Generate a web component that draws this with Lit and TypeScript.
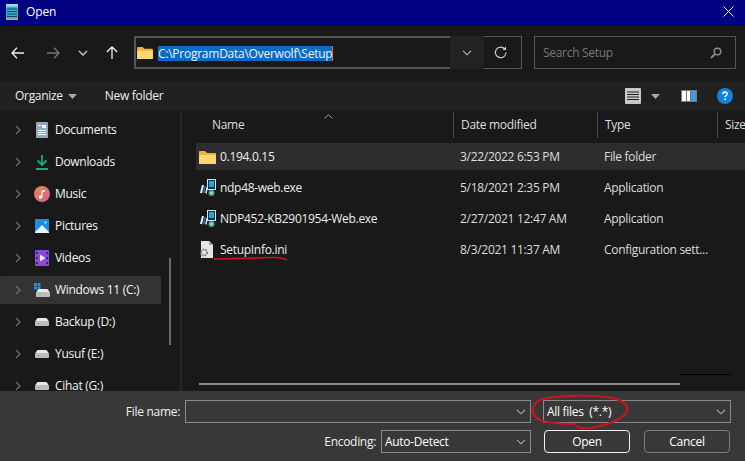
import { LitElement, html, css, svg } from "lit";
import { customElement } from "lit/decorators.js";

const chevronDown = (c = "#bbb") => html`<svg width="10" height="6" viewBox="0 0 10 6"><path d="M1 .8 5 4.800 9 .8" fill="none" stroke="${c}" stroke-width="1.100"/></svg>`;
const caret = html`<svg width="9" height="5" viewBox="0 0 9 5"><path d="M0 0h9L4.500 5z" fill="#aaa"/></svg>`;
const folder = (w: number, h: number) => html`<svg width="${w}" height="${h}" viewBox="0 0 17 14"><path d="M0 2a1 1 0 0 1 1-1h5l2 2h8a1 1 0 0 1 1 1v9a1 1 0 0 1-1 1H1a1 1 0 0 1-1-1z" fill="#eeb33c"/><path d="M0 5h17v8a1 1 0 0 1-1 1H1a1 1 0 0 1-1-1z" fill="#fcd873"/></svg>`;
const drive = html`<svg width="14" height="8" viewBox="0 0 14 8"><path d="M2.500 0h9L14 3.500H0z" fill="#e8e8e8"/><rect y="3" width="14" height="5" rx="1" fill="#bdbdbd"/><rect x="2.500" y="5" width="2" height="1" fill="#4fd34f"/></svg>`;
const exeIcon = html`<svg width="17" height="18" viewBox="0 0 17 18"><rect x="8.500" y=".5" width="8" height="10" fill="#0d2f5c" stroke="#d8e4ee"/><rect x="10" y="2" width="5" height="6" fill="#2aa6c6"/><path d="M1 14 3 6h2L3 14z" fill="#f2f2f2"/><path d="M3.500 14 5.500 7h1.500L5.500 14z" fill="#2d62c4"/><path d="M6 15 7.500 8H9L7.500 15z" fill="#efefef"/><rect x="1" y="14" width="6" height="1.500" fill="#222"/><circle cx="12.500" cy="14" r="3" fill="#3aa8c0"/><circle cx="12.500" cy="14" r="1.300" fill="#dfe04a"/></svg>`;
const iniIcon = html`<svg width="15" height="17" viewBox="0 0 15 17"><path d="M2 0h8l4 4v13H2z" fill="#e4e4e4"/><path d="M10 0v4h4z" fill="#a8a8a8"/><circle cx="5" cy="11.500" r="3" fill="none" stroke="#7a7a7a" stroke-width="2" stroke-dasharray="1.500 1"/></svg>`;

const icons: Record<string, unknown> = {
  doc: html`<svg width="12" height="16" viewBox="0 0 12 16"><rect width="12" height="16" rx="1" fill="#8fa9c4"/><path d="M6 3h4v3H6zM2 3h3v1H2zM2 8h8v1H2zM2 10h8v1H2zM2 12h8v1H2z" fill="#f4f7fa"/></svg>`,
  down: html`<svg width="12" height="15" viewBox="0 0 12 15"><path d="M6 0v10M1.500 5.500 6 10l4.500-4.500" fill="none" stroke="#1fa884" stroke-width="1.800"/><rect y="13" width="12" height="2" fill="#1fa884"/></svg>`,
  music: html`<svg width="16" height="16" viewBox="0 0 16 16"><defs><linearGradient id="m" x1="0" y1="0" x2="1" y2="1"><stop offset="0" stop-color="#ef8a4a"/><stop offset="1" stop-color="#c9609a"/></linearGradient></defs><circle cx="8" cy="8" r="8" fill="url(#m)"/><circle cx="6.500" cy="11" r="1.800" fill="#fff"/><path d="M7.500 11V4.500L11 4v1.800l-2.500.5V11z" fill="#fff"/></svg>`,
  pic: html`<svg width="14" height="14" viewBox="0 0 14 14"><rect width="14" height="14" rx="1" fill="#1a8fe0"/><path d="M0 13 7 6l7 7v1H0z" fill="#eaf6ff"/><circle cx="10.500" cy="3.500" r="1" fill="#fff"/></svg>`,
  vid: html`<svg width="14" height="16" viewBox="0 0 14 16"><rect width="14" height="16" rx="1" fill="#8a4bd8"/><path d="M1 2h1.500v2H1zM1 7h1.500v2H1zM1 12h1.500v2H1zM11.500 2H13v2h-1.500zM11.500 7H13v2h-1.500zM11.500 12H13v2h-1.500z" fill="#2a1450"/><path d="M5 4.500v7L10.500 8z" fill="#efe6ff"/></svg>`,
  win: html`<svg width="16" height="15" viewBox="0 0 16 15"><path d="M0 0h3v3H0zM3.500 0h3v3h-3zM0 3.500h3v3H0zM3.500 3.500h3v3h-3z" fill="#1d8fe6"/><g transform="translate(2 6)"><path d="M2.500 0h9L14 3.500H0z" fill="#e8e8e8"/><rect y="3" width="14" height="5" rx="1" fill="#bdbdbd"/><rect x="2.500" y="5" width="2" height="1" fill="#4fd34f"/></g></svg>`,
  drive,
};

const side = [
  ["doc", "Documents"], ["down", "Downloads"], ["music", "Music"], ["pic", "Pictures"], ["vid", "Videos"],
  ["win", "Windows 11 (C:)"], ["drive", "Backup (D:)"], ["drive", "Yusuf (E:)"], ["drive", "Cihat (G:)"],
];
const files = [
  [folder(17, 14), "0.194.0.15", "3/22/2022 6:53 PM", "File folder"],
  [exeIcon, "ndp48-web.exe", "5/18/2021 2:35 PM", "Application"],
  [exeIcon, "NDP452-KB2901954-Web.exe", "2/27/2021 12:47 AM", "Application"],
  [iniIcon, "SetupInfo.ini", "8/3/2021 11:37 AM", "Configuration sett..."],
];

@customElement("app-root")
export class AppRoot extends LitElement {
  static styles = css`
    :host { display: block; position: relative; width: 745px; height: 461px; overflow: hidden; background: #191919; color: #fff;
      font: 12px/16px "Open Sans", "Noto Sans", sans-serif; letter-spacing: -0.3px; }
    .title { height: 26px; background: #000080; display: flex; align-items: center; padding: 0 0 3px 6px; box-sizing: border-box; }
    .title .name { margin-left: 8px; flex: 1; letter-spacing: -0.1px; }
    .title .close { margin-right: 11px; display: flex; }
    .nav { height: 55px; display: flex; align-items: flex-start; padding-top: 10px; box-sizing: border-box; }
    .arrows { width: 134px; height: 33px; display: flex; align-items: center; }
    .arrows svg { flex: none; }
    .b1 { margin-left: 11px; } .b2 { margin-left: 23px; } .b3 { margin-left: 18px; } .b4 { margin-left: 18px; }
    .addr { width: 316px; height: 33px; box-sizing: border-box; border: 2px solid #555; border-right: 0; display: flex; align-items: center; padding-left: 1px; }
    .addr .path { margin-left: 5px; margin-top: 2px; background: #0a6bc4; height: 15px; line-height: 15px; color: #f2f2f2; border-right: 1px solid #e8742a; letter-spacing: -0.25px; }
    .drop { width: 34px; height: 33px; background: #222; display: flex; align-items: center; justify-content: center; }
    .ref { width: 38px; height: 33px; box-sizing: border-box; border: 1px solid #555; border-left: 0; display: flex; align-items: center; justify-content: center; padding-right: 4px; }
    .search { margin-left: 12px; width: 202px; height: 33px; box-sizing: border-box; border: 1px solid #555; display: flex; align-items: center; justify-content: space-between; padding: 0 13px 0 8px; color: #777; }
    .tools { height: 30px; background: #202020; display: flex; align-items: center; padding-left: 15px; color: #eee; }
    .tools .cr { margin-left: 5px; display: flex; }
    .tools .nf { margin-left: 28px; flex: 1; }
    .tools .v { display: flex; }
    .tools .vc { margin-left: 10px; margin-right: 21px; display: flex; }
    .tools .help { margin: 0 12px 0 20px; display: flex; }
    .main { height: 280px; display: flex; }
    .sidebar { width: 180px; box-sizing: border-box; padding-top: 5px; overflow: hidden; display: flex; flex-direction: column; gap: 4px; position: relative; flex: none; }
    .srow { width: 161px; min-height: 28px; height: 28px; flex: none; display: flex; align-items: center; border-radius: 2px; color: #f4f4f4; }
    .srow.sel { background: #333; }
    .srow .ch { margin-left: 15px; width: 8px; display: flex; }
    .srow .ic { margin-left: 8px; width: 22px; height: 20px; display: flex; align-items: center; justify-content: center; flex: none; }
    .srow .tx { margin-left: 2px; white-space: nowrap; }
    .vbar { position: absolute; left: 169px; top: 147px; width: 2px; height: 87px; background: #6a6a6a; }
    .list { flex: 1; border-left: 2px solid #262626; margin-top: 1px; position: relative; overflow: hidden; }
    .head { height: 26px; display: grid; grid-template-columns: 271px 144px 120px 1fr; color: #ddd; position: relative; }
    .head div { padding-left: 7px; display: flex; align-items: center; border-left: 1px solid #4a4a4a; white-space: nowrap; }
    .head div:first-child { padding-left: 30px; border-left: 0; }
    .sort { position: absolute; left: 142px; top: 2px; display: flex; }
    .rows { margin: 5px 0 0 14px; display: flex; flex-direction: column; gap: 4px; }
    .frow { height: 27px; display: grid; grid-template-columns: 257px 144px 1fr; align-items: center; color: #ededed; }
    .frow.sel { background: #2d2d2d; }
    .fname { display: flex; align-items: center; }
    .fic { width: 24px; padding-left: 3px; box-sizing: border-box; display: flex; flex: none; }
    .frow .d { padding-left: 7px; color: #ddd; }
    .frow .t { padding-left: 7px; color: #ddd; white-space: nowrap; }
    .hbar { position: absolute; left: 17px; top: 271px; width: 481px; height: 2px; background: #8a8a8a; }
    .blk { position: absolute; left: 498px; top: 262px; width: 51px; height: 1px; background: #000; }
    .foot { height: 70px; background: #383838; box-sizing: border-box; padding-top: 9px; display: flex; flex-direction: column; gap: 7px; }
    .fl { display: flex; height: 23px; align-items: center; }
    .lab { text-align: right; margin-right: 5px; color: #f0f0f0; flex: none; }
    .box { height: 23px; box-sizing: border-box; border: 1px solid #8a8a8a; display: flex; align-items: center; justify-content: space-between; padding: 0 4px 0 3px; flex: none; }
    .btn { width: 86px; height: 23px; box-sizing: border-box; border: 1px solid #7c7c7c; border-radius: 4px; display: flex; align-items: center; justify-content: center; flex: none; }
    .btn.pri { border-color: #f0f0f0; }
    .ink { position: absolute; left: 0; top: 0; pointer-events: none; }
  `;

  render() {
    return html`
      <div class="title">
        <svg width="12" height="16" viewBox="0 0 12 16"><rect y="1" width="12" height="15" fill="#3ea9c9"/><path d="M1 5h10M1 7.500h10M1 10h10M1 12.500h10" stroke="#0c4a63" stroke-width="1"/><path d="M0 0h12v2.500H0z" fill="#9fdcec"/><rect y="14.500" width="12" height="1.500" fill="#e0a060"/></svg>
        <span class="name">Open</span>
        <span class="close"><svg width="11" height="11" viewBox="0 0 11 11"><path d="M.5.5l10 10M10.500.5l-10 10" stroke="#fff" stroke-width="1"/></svg></span>
      </div>
      <div class="nav">
        <div class="arrows">
          <svg class="b1" width="13" height="12" viewBox="0 0 13 12"><path d="M6 .8 1 6l5 5.200M1 6h12" fill="none" stroke="#eee" stroke-width="1.300"/></svg>
          <svg class="b2" width="13" height="12" viewBox="0 0 13 12"><path d="M7 .8 12 6l-5 5.200M12 6H0" fill="none" stroke="#777" stroke-width="1.300"/></svg>
          <svg class="b3" width="10" height="6" viewBox="0 0 10 6"><path d="M1 1l4 4 4-4" fill="none" stroke="#ccc" stroke-width="1.300"/></svg>
          <svg class="b4" width="12" height="13" viewBox="0 0 12 13"><path d="M.8 6 6 1l5.200 5M6 1v12" fill="none" stroke="#eee" stroke-width="1.300"/></svg>
        </div>
        <div class="addr">${folder(16, 13)}<span class="path">C:\\ProgramData\\Overwolf\\Setup</span></div>
        <div class="drop">${chevronDown("#bbb")}</div>
        <div class="ref"><svg width="13" height="13" viewBox="0 0 13 13"><path d="M10.800 3A5.300 5.300 0 1 0 12 6.500" fill="none" stroke="#ccc" stroke-width="1.200"/><path d="M12 .5V4H8.500z" fill="#ccc"/></svg></div>
        <div class="search"><span>Search Setup</span><svg width="12" height="12" viewBox="0 0 12 12"><circle cx="7.500" cy="4.500" r="3.300" fill="none" stroke="#888" stroke-width="1.500"/><path d="M5 7 1 11" stroke="#888" stroke-width="2"/></svg></div>
      </div>
      <div class="tools">
        <span>Organize</span><span class="cr">${caret}</span>
        <span class="nf">New folder</span>
        <span class="v"><svg width="16" height="16" viewBox="0 0 16 16"><rect width="16" height="16" rx="1" fill="#c8c8c8"/><path d="M2 4h12M2 6.500h12M2 9h12M2 11.500h12" stroke="#222"/></svg></span>
        <span class="vc">${caret}</span>
        <span class="v"><svg width="16" height="12" viewBox="0 0 16 12"><rect width="16" height="12" fill="#777"/><rect x="1" y="1" width="4" height="10" fill="#fff"/><rect x="6" y="1" width="3" height="10" fill="#fff"/><rect x="10" y="1" width="5" height="10" fill="#3f9ae8"/></svg></span>
        <span class="help"><svg width="16" height="16" viewBox="0 0 16 16"><circle cx="8" cy="8" r="8" fill="#1283dc"/><path d="M5.800 6.200C5.800 4.800 6.800 4 8 4s2.200.8 2.200 2c0 1.500-2.200 1.700-2.200 3.200" fill="none" stroke="#fff" stroke-width="1.400"/><rect x="7.200" y="10.500" width="1.600" height="1.600" fill="#fff"/></svg></span>
      </div>
      <div class="main">
        <div class="sidebar">
          ${side.map(([ic, t]) => html`
            <div class="srow ${t.startsWith("Windows") ? "sel" : ""}">
              <span class="ch"><svg width="7" height="10" viewBox="0 0 7 10"><path d="M1 1l4 4-4 4" fill="none" stroke="#666" stroke-width="1.500"/></svg></span>
              <span class="ic">${icons[ic]}</span>
              <span class="tx">${t}</span>
            </div>`)}
          <div class="vbar"></div>
        </div>
        <div class="list">
          <div class="head">
            <div>Name</div><div>Date modified</div><div>Type</div><div>Size</div>
            <span class="sort"><svg width="9" height="5" viewBox="0 0 9 5"><path d="M.5 4.500 4.500.8l4 3.700" fill="none" stroke="#999"/></svg></span>
          </div>
          <div class="rows">
            ${files.map((f, i) => html`
              <div class="frow ${i === 0 ? "sel" : ""}">
                <div class="fname"><span class="fic">${f[0]}</span><span>${f[1]}</span></div>
                <div class="d">${f[2]}</div>
                <div class="t">${f[3]}</div>
              </div>`)}
          </div>
          <div class="blk"></div>
          <div class="hbar"></div>
        </div>
      </div>
      <div class="foot">
        <div class="fl">
          <span class="lab" style="width:180px">File name:</span>
          <div class="box" style="width:346px"><span></span>${chevronDown("#aaa")}</div>
          <div class="box" style="width:188px;margin-left:12px"><span>All files&nbsp; (*.*)</span>${chevronDown("#aaa")}</div>
        </div>
        <div class="fl">
          <span class="lab" style="width:376px">Encoding:</span>
          <div class="box" style="width:150px"><span>Auto-Detect</span>${chevronDown("#aaa")}</div>
          <div class="btn pri" style="margin-left:13px">Open</div>
          <div class="btn" style="margin-left:14px">Cancel</div>
        </div>
      </div>
      <svg class="ink" width="745" height="461" viewBox="0 0 745 461">
        ${svg`<path d="M214 259C235 259 262 258 276 257.500C281 258 285 259 287 259.500" fill="none" stroke="#c8141c" stroke-width="1.600"/>
        <path d="M576 424C565 424 548 423 540 420C531 416 530 405 540 400C555 395 590 395 607 397C622 399 629 405 627 411C625 418 610 424 596 427C588 429 580 428.500 576 426" fill="none" stroke="#c8141c" stroke-width="2.200"/>`}
      </svg>
    `;
  }
}
